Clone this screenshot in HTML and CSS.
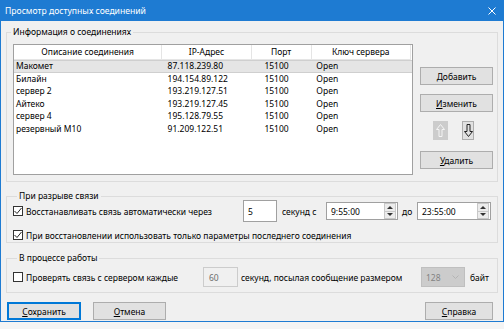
FILE: index.html
```html
<!DOCTYPE html>
<html>
<head>
  <meta charset="utf-8">
  <link rel="stylesheet" href="styles.css">
</head>
<body>
  <div class="window">
    <div class="titlebar">
      <span class="title">Просмотр доступных соединений</span>
      <svg class="close" width="8" height="8" viewBox="0 0 8 8"><path d="M0.5 0.5L7.5 7.5M7.5 0.5L0.5 7.5" stroke="#fff" stroke-width="1"/></svg>
    </div>

    <div class="client">
      <fieldset class="group">
        <legend>Информация о соединениях</legend>
        <div class="info-body">
          <div class="list">
            <div class="list-row list-head">
              <div class="col-name">Описание соединения</div>
              <div class="col-ip">IP-Адрес</div>
              <div class="col-port">Порт</div>
              <div class="col-key">Ключ сервера</div>
            </div>
            <div class="list-row selected">
              <div class="col-name">Макомет</div><div class="col-ip">87.118.239.80</div><div class="col-port">15100</div><div class="col-key">Open</div>
            </div>
            <div class="list-row">
              <div class="col-name">Билайн</div><div class="col-ip">194.154.89.122</div><div class="col-port">15100</div><div class="col-key">Open</div>
            </div>
            <div class="list-row">
              <div class="col-name">сервер 2</div><div class="col-ip">193.219.127.51</div><div class="col-port">15100</div><div class="col-key">Open</div>
            </div>
            <div class="list-row">
              <div class="col-name">Айтеко</div><div class="col-ip">193.219.127.45</div><div class="col-port">15100</div><div class="col-key">Open</div>
            </div>
            <div class="list-row">
              <div class="col-name">сервер 4</div><div class="col-ip">195.128.79.55</div><div class="col-port">15100</div><div class="col-key">Open</div>
            </div>
            <div class="list-row">
              <div class="col-name">резервный M10</div><div class="col-ip">91.209.122.51</div><div class="col-port">15100</div><div class="col-key">Open</div>
            </div>
          </div>

          <div class="side">
            <button class="btn btn-add"><u>Д</u>обавить</button>
            <button class="btn btn-edit"><u>И</u>зменить</button>
            <div class="arrows">
              <span class="arrow-btn arrow-up">
                <svg width="9" height="13" viewBox="0 0 9 13"><path d="M4.5 0.5L8.5 5.5H6V12.5H3V5.5H0.5Z" fill="none" stroke="#f4f4f4" stroke-width="1"/></svg>
              </span>
              <span class="arrow-btn arrow-down">
                <svg width="9" height="13" viewBox="0 0 9 13"><path d="M4.5 12.5L8.5 7.5H6V0.5H3V7.5H0.5Z" fill="none" stroke="#222" stroke-width="1"/></svg>
              </span>
            </div>
            <button class="btn btn-del"><u>У</u>далить</button>
          </div>
        </div>
      </fieldset>

      <fieldset class="group group-restore">
        <legend>При разрыве связи</legend>
        <div class="row row-auto">
          <label class="check check-auto">
            <span class="box"><svg width="8" height="8" viewBox="0 0 8 8"><path d="M0.5 4L3 6.5L7.5 1" fill="none" stroke="#222" stroke-width="1"/></svg></span>
            Восстанавливать связь автоматически через
          </label>
          <span class="edit edit-sec">5</span>
          <span class="caption cap-sec">секунд с</span>
          <span class="edit time">
            <span class="time-value">9:55:00</span>
            <span class="spin"><span class="spin-up"></span><span class="spin-down"></span></span>
          </span>
          <span class="caption cap-to">до</span>
          <span class="edit time time-to">
            <span class="time-value">23:55:00</span>
            <span class="spin"><span class="spin-up"></span><span class="spin-down"></span></span>
          </span>
        </div>
        <div class="row row-last">
          <label class="check">
            <span class="box"><svg width="8" height="8" viewBox="0 0 8 8"><path d="M0.5 4L3 6.5L7.5 1" fill="none" stroke="#222" stroke-width="1"/></svg></span>
            При восстановлении использовать только параметры последнего соединения
          </label>
        </div>
      </fieldset>

      <fieldset class="group group-work">
        <legend>В процессе работы</legend>
        <div class="row row-work">
          <label class="check check-ping">
            <span class="box"></span>
            Проверять связь с сервером каждые
          </label>
          <span class="edit edit-disabled">60</span>
          <span class="caption cap-size">секунд, посылая сообщение размером</span>
          <span class="combo-disabled">
            128
            <svg width="7" height="4" viewBox="0 0 7 4"><path d="M0.5 0.5L3.5 3.5L6.5 0.5" fill="none" stroke="#b4b4b4" stroke-width="1"/></svg>
          </span>
          <span class="caption">байт</span>
        </div>
      </fieldset>

      <div class="footer">
        <button class="btn btn-default"><u>С</u>охранить</button>
        <button class="btn btn-cancel"><u>О</u>тмена</button>
        <button class="btn btn-help"><u>С</u>правка</button>
      </div>
    </div>
  </div>
  <div class="desktop"></div>
</body>
</html>
```

FILE: styles.css
```css
body {
  margin: 0;
  width: 504px;
  height: 329px;
  overflow: hidden;
  background-color: #f4f4f4;
  font-family: 'Noto Sans', sans-serif;
  font-size: 8.5px;
  color: #000;
}

.window {
  height: 322px;
  box-sizing: border-box;
  display: flex;
  flex-direction: column;
  background-color: #f0f0f0;
  border: 1px solid #1e7bd2;
  border-top: none;
}

.titlebar {
  height: 21px;
  flex: none;
  display: flex;
  align-items: center;
  justify-content: space-between;
  padding: 0 7px 0 4px;
  background-color: #1e7bd2;
  color: #fff;
}
.title {
  font-size: 8.6px;
}

.client {
  flex: 1;
  display: flex;
  flex-direction: column;
  padding: 5px 5px 0 5px;
}

.group {
  margin: 0;
  padding: 0;
  min-width: 0;
  border: 1px solid #dcdcdc;
}
.group legend {
  margin-left: 4px;
  padding: 0 2px;
  line-height: 12px;
}
.group-restore {
  margin-top: 8px;
  padding: 0 0 0 6px;
}
.group-work {
  margin-top: 9px;
  padding: 3px 0 5px 6px;
}

/* connections list */
.info-body {
  display: flex;
  padding: 6px 3px 6px 6px;
}
.list {
  width: 400px;
  height: 131px;
  box-sizing: border-box;
  border: 1px solid #a0a0a0;
  background-color: #fff;
}
.list-row {
  display: flex;
  height: 12.6px;
  line-height: 12.6px;
  white-space: nowrap;
}
.list-head {
  height: 14px;
  line-height: 13px;
  border-bottom: 1px solid #e5e5e5;
  margin-right: 1px;
}
.list-head > div {
  text-align: center;
  border-right: 1px solid #e5e5e5;
  padding: 0;
}
.list-row.selected {
  background-color: #e5e5e5;
  box-shadow: inset 0 1px 0 #cfcfcf, inset 0 -1px 0 #cfcfcf;
}
.col-name {
  width: 149px;
  padding-left: 2px;
  box-sizing: border-box;
}
.col-ip {
  width: 90px;
  padding-left: 5px;
  box-sizing: border-box;
}
.col-port {
  width: 60px;
  padding-left: 12px;
  box-sizing: border-box;
}
.col-key {
  width: 100px;
  padding-left: 4px;
  box-sizing: border-box;
}

.side {
  display: flex;
  flex-direction: column;
  margin-left: 7px;
  padding-top: 23px;
}

.btn {
  width: 73px;
  height: 18px;
  padding: 0;
  font-family: 'Noto Sans', sans-serif;
  font-size: 8.5px;
  color: #000;
  background-color: #e1e1e1;
  border: 1px solid #adadad;
  border-radius: 0;
}
.btn u {
  text-decoration-thickness: 1px;
  text-underline-offset: 1px;
}
.btn-edit {
  margin-top: 9px;
}
.arrows {
  display: flex;
  margin-top: 9px;
  padding-left: 13px;
  gap: 14px;
}
.arrow-btn {
  height: 19px;
  box-sizing: border-box;
  display: flex;
  align-items: center;
  justify-content: center;
}
.arrow-up {
  width: 15px;
  background-color: #cccccc;
}
.arrow-down {
  width: 12px;
  background-color: #e1e1e1;
  border: 1px solid #adadad;
}
.btn-del {
  margin-top: 11px;
}

/* rows with checkboxes */
.row {
  display: flex;
  align-items: center;
}
.row-auto {
  height: 22px;
  margin-top: -2px;
}
.row-last {
  height: 14px;
  margin-top: 6px;
}
.row-work {
  height: 20px;
}
.check {
  display: flex;
  align-items: center;
  white-space: nowrap;
}
.check-auto {
  width: 230px;
}
.check-ping {
  width: 190px;
}
.box {
  width: 10px;
  height: 10px;
  box-sizing: border-box;
  margin-right: 3px;
  border: 1px solid #333;
  background-color: #fff;
  display: flex;
  align-items: center;
  justify-content: center;
}

.edit {
  height: 20px;
  box-sizing: border-box;
  border: 1px solid #a0a0a0;
  background-color: #fff;
  display: flex;
  align-items: center;
  padding-left: 4px;
}
.edit-sec {
  width: 34px;
  height: 22px;
}
.caption {
  padding-left: 5px;
  white-space: nowrap;
}
.cap-sec {
  width: 49px;
  box-sizing: border-box;
}
.cap-to {
  width: 19px;
  padding-left: 4px;
  box-sizing: border-box;
}
.time {
  width: 72px;
  height: 18px;
  padding-right: 1px;
}
.time-to {
  width: 74px;
}
.time-value {
  flex: 1;
}
.spin {
  width: 10px;
  height: 14px;
  display: flex;
  flex-direction: column;
  border: 1px solid #c8c8c8;
  background-color: #ececec;
}
.spin-up, .spin-down {
  flex: 1;
  position: relative;
}
.spin-up {
  border-bottom: 1px solid #c8c8c8;
}
.spin-up::after, .spin-down::after {
  content: "";
  position: absolute;
  left: 2px;
  top: 2px;
  border-left: 3px solid transparent;
  border-right: 3px solid transparent;
}
.spin-up::after {
  border-bottom: 3px solid #333;
}
.spin-down::after {
  top: 1px;
  border-top: 3px solid #333;
}

.edit-disabled {
  width: 35px;
  background-color: #f0f0f0;
  border-color: #cccccc;
  color: #6d6d6d;
  padding-left: 5px;
}
.cap-size {
  width: 183px;
  box-sizing: border-box;
  padding-left: 3px;
}
.combo-disabled {
  width: 44px;
  height: 20px;
  box-sizing: border-box;
  display: flex;
  align-items: center;
  justify-content: space-between;
  padding: 0 5px 0 4px;
  background-color: #cccccc;
  border: 1px solid #bfbfbf;
  color: #838383;
}

/* bottom buttons */
.footer {
  display: flex;
  margin-top: 9px;
  padding-left: 1px;
}
.btn-default {
  width: 74px;
  border: 1px solid #0078d7;
  box-shadow: inset 0 0 0 1px #0078d7;
}
.btn-cancel {
  margin-left: 12px;
}
.btn-help {
  margin-left: auto;
  width: 68px;
  margin-right: 5px;
}

.desktop {
  height: 7px;
}
```
